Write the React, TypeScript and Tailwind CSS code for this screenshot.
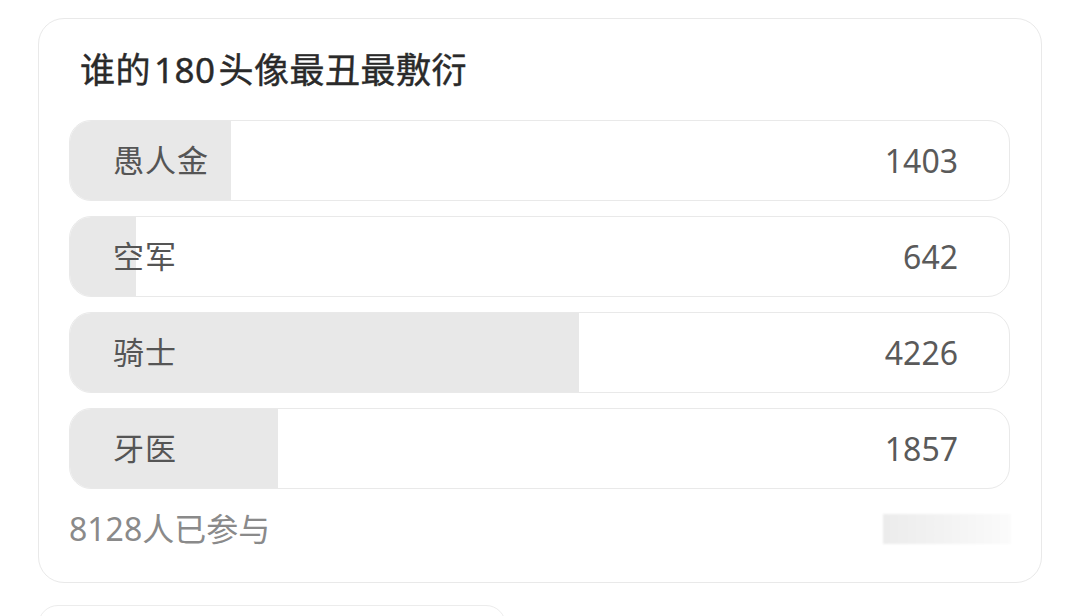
import React from 'react'

const options = [
  { name: '愚人金', votes: 1403, fill: 161 },
  { name: '空军', votes: 642, fill: 66 },
  { name: '骑士', votes: 4226, fill: 509 },
  { name: '牙医', votes: 1857, fill: 208 },
]

export default function App() {
  return (
    <div
      className="w-[1080px] h-[616px] overflow-hidden bg-white px-[38px] pt-[18px]"
      style={{ fontFamily: '"Noto Sans", "Noto Sans CJK SC", sans-serif' }}
    >
      <div className="border border-[#e9e9e9] rounded-[26px] pl-[30px] pr-[31px] pt-[28px] pb-[31px]">
        <h1 className="pl-[11px] text-[35px] leading-[46px] font-normal tracking-[0.5px] text-[#2a2a2a] [-webkit-text-stroke:0.4px_#2a2a2a]">
          谁的<span className="mx-[3px]">180</span>头像最丑最敷衍
        </h1>
        <div className="mt-[27px] flex flex-col gap-[15px]">
          {options.map(({ name, votes, fill }) => (
            <div
              key={name}
              className="relative h-[81px] rounded-[22px] border border-[#e9e9e9] overflow-hidden flex items-center justify-between pl-[43px] pr-[51px]"
            >
              <div
                className="absolute left-0 top-0 bottom-0 bg-[#e8e8e8]"
                style={{ width: fill }}
              />
              <span className="relative text-[31px] text-[#555] tracking-[1px]">{name}</span>
              <span className="relative text-[32px] text-[#5a5a5a]">{votes}</span>
            </div>
          ))}
        </div>
        <div className="mt-[18px] flex items-center justify-between">
          <span className="text-[32px] text-[#8a8a8a] leading-[44px]">8128人已参与</span>
          <div className="w-[128px] h-[30px] mr-[-1px] bg-gradient-to-r from-[#ececec] via-[#f3f3f3] to-[#fbfbfb] blur-[1px]" />
        </div>
      </div>
      <div className="mt-[22px] w-[468px] h-[40px] border border-[#ececec] rounded-[20px]" />
    </div>
  )
}
